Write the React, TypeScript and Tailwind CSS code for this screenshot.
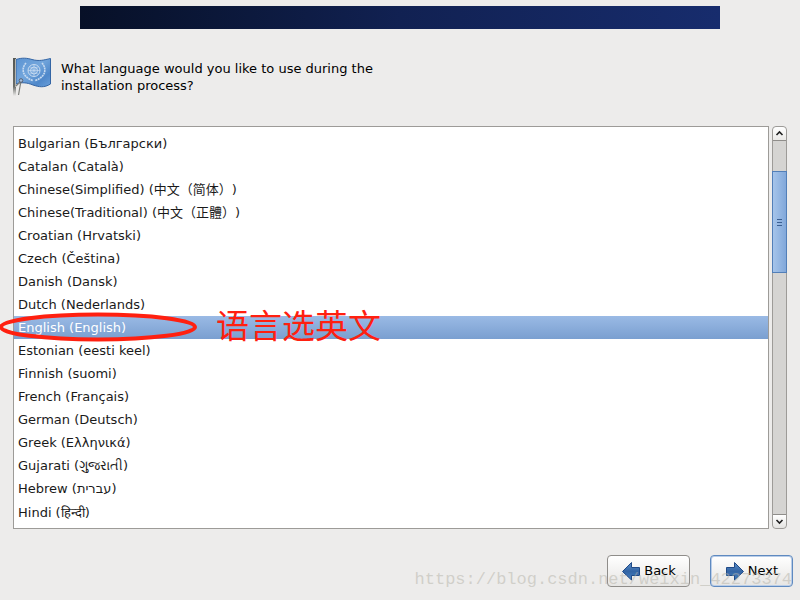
import { useState } from "react";

const languages = [
  "Bulgarian (Български)",
  "Catalan (Català)",
  "Chinese(Simplified) (中文（简体）)",
  "Chinese(Traditional) (中文（正體）)",
  "Croatian (Hrvatski)",
  "Czech (Čeština)",
  "Danish (Dansk)",
  "Dutch (Nederlands)",
  "English (English)",
  "Estonian (eesti keel)",
  "Finnish (suomi)",
  "French (Français)",
  "German (Deutsch)",
  "Greek (Ελληνικά)",
  "Gujarati (ગુજરાતી)",
  "Hebrew (עברית)",
  "Hindi (हिन्दी)",
];

const tallRows = ["Hebrew (עברית)", "Hindi (हिन्दी)"];

function FlagIcon() {
  return (
    <svg width="40" height="40" viewBox="0 0 40 40" aria-hidden="true">
      <defs>
        <linearGradient id="flag" x1="0" y1="0" x2="1" y2="1">
          <stop offset="0" stopColor="#5b93d2" />
          <stop offset="0.45" stopColor="#73a6dc" />
          <stop offset="0.75" stopColor="#4f88ca" />
          <stop offset="1" stopColor="#6a9fda" />
        </linearGradient>
        <linearGradient id="pole" x1="0" y1="0" x2="0" y2="1">
          <stop offset="0" stopColor="#555753" />
          <stop offset="0.75" stopColor="#6b6d69" />
          <stop offset="1" stopColor="#6b6d69" stopOpacity="0" />
        </linearGradient>
      </defs>
      <path
        d="M4 2.500 C10 0.500 15 1 20 2.500 C27 4.500 32 3 38.500 1.500 V27 C32 31 27 30 21 28 C15 25.500 9 25 4 27 Z"
        fill="url(#flag)"
        stroke="#3465a4"
      />
      <g fill="none" stroke="#c6daf0" strokeWidth="1">
        <circle cx="22" cy="13.500" r="6" />
        <circle cx="22" cy="13.500" r="3.500" />
        <path d="M16 13.500 H28 M22 7.500 V19.500 M18 9.500 L26 17.500 M26 9.500 L18 17.500" strokeWidth="0.700" />
        <path d="M14 6 C8 13 12 21 21 23.500 M30 6 C36 13 32 21 23 23.500" strokeWidth="1.600" strokeDasharray="2 0.600" />
      </g>
      <rect x="1" y="1" width="3" height="38" fill="url(#pole)" />
      <path d="M3.500 2 V30" stroke="#b4b6b2" />
      <path d="M9 24 L6.500 38 M4 29 L8 25" stroke="#7d7f7b" strokeWidth="1.200" />
      <circle cx="9" cy="23.500" r="1.800" fill="#a9c0dc" stroke="#555f70" />
    </svg>
  );
}

function ArrowIcon({ forward }: { forward: boolean }) {
  return (
    <svg width="20" height="20" viewBox="0 0 20 20" aria-hidden="true">
      <defs>
        <linearGradient id={forward ? "next" : "back"} x1="0" y1="0" x2="0" y2="1">
          <stop offset="0" stopColor="#5a8fca" />
          <stop offset="0.500" stopColor="#3465a4" />
          <stop offset="1" stopColor="#4680c2" />
        </linearGradient>
      </defs>
      <path
        d={
          forward
            ? "M1.500 6.500 H9.500 V1.500 L18.500 10.500 L9.500 19 V14.500 H1.500 Z"
            : "M18.500 6.500 H10.500 V1.500 L1.500 10.500 L10.500 19 V14.500 H18.500 Z"
        }
        fill={forward ? "url(#next)" : "url(#back)"}
        stroke="#204a87"
      />
    </svg>
  );
}

function Chevron({ down }: { down?: boolean }) {
  return (
    <svg width="9" height="7" viewBox="0 0 9 7" aria-hidden="true">
      <path d={down ? "M1.500 2 L4.500 5 L7.500 2" : "M1.500 5 L4.500 2 L7.500 5"} fill="none" stroke="#202020" strokeWidth="1.600" />
    </svg>
  );
}

function Scrollbar() {
  return (
    <div className="flex w-[15px] shrink-0 flex-col rounded-sm border border-[#9d9b98] bg-[#d5d4d2]">
      <button aria-label="Scroll up" className="flex h-3.5 shrink-0 items-center justify-center rounded-t-sm border-b border-[#8f8d8a] bg-linear-to-b from-white to-[#eae9e7]">
        <Chevron />
      </button>
      <div className="grow-30" />
      <div className="-mx-px flex h-[102px] flex-col items-center justify-center gap-0.5 border border-[#527fb8] bg-linear-to-r from-[#a5c4ea] to-[#82a8da]">
        <span className="h-px w-[5px] bg-[#3b5f92]" />
        <span className="h-px w-[5px] bg-[#3b5f92]" />
        <span className="h-px w-[5px] bg-[#3b5f92]" />
      </div>
      <div className="grow-241" />
      <button aria-label="Scroll down" className="flex h-3.5 shrink-0 items-center justify-center rounded-b-sm border-t border-[#8f8d8a] bg-linear-to-b from-white to-[#e4e3e1]">
        <Chevron down />
      </button>
    </div>
  );
}

export default function App() {
  const [language, setLanguage] = useState("English (English)");

  return (
    <main className="relative flex min-h-screen flex-col overflow-hidden bg-[#edeceb] pt-1.5 pb-[13px] font-['DejaVu_Sans','Noto_Sans_CJK_SC',sans-serif] text-[13px] text-[#1a1a1a]">
      <div className="mx-auto h-[23px] w-4/5 shrink-0 bg-linear-to-r from-[#071027] via-[#112152] to-[#172c6d]" />

      <header className="mt-7 flex h-10 items-center gap-2 pl-3 text-black">
        <FlagIcon />
        <h1 className="w-[340px] pl-px leading-[17px]">What language would you like to use during the installation process?</h1>
      </header>

      <section className="mt-[29px] flex grow gap-[3px] px-[13px]">
        <fieldset aria-label="Installation language" className="min-w-0 grow border border-[#9d9b98] bg-white pt-[5px] pb-0.5">
          {languages.map((name) => (
            <label
              key={name}
              className={`flex items-center px-1 leading-5 whitespace-nowrap [text-spacing-trim:space-all] ${tallRows.includes(name) ? "h-6" : "h-[23px]"} ${
                name === language ? "bg-linear-to-b from-[#9abae5] to-[#7a9fd0] text-white" : ""
              }`}
            >
              <input
                type="radio"
                name="language"
                className="size-0 appearance-none"
                checked={name === language}
                onChange={() => setLanguage(name)}
              />
              {name}
            </label>
          ))}
        </fieldset>
        <Scrollbar />
      </section>

      <footer className="mt-[26px] flex justify-end gap-5 pr-[7px] text-black">
        <button className="flex h-8 w-[83px] items-center justify-center gap-[3px] rounded-sm border border-[#8f8d8a] bg-linear-to-b from-white to-[#e6e5e3]">
          <ArrowIcon forward={false} />
          Back
        </button>
        <button className="flex h-8 w-[83px] items-center justify-center gap-[3px] rounded-sm border border-[#5f8ac0] bg-linear-to-b from-white to-[#e6e5e3] ring-1 ring-[#b9cde8] ring-inset">
          <ArrowIcon forward />
          Next
        </button>
      </footer>

      <svg className="pointer-events-none absolute top-[312px] left-0" width="198" height="31" viewBox="0 0 198 31" aria-hidden="true">
        <ellipse cx="98" cy="15" rx="97" ry="12.500" fill="none" stroke="#ff2010" strokeWidth="4" />
      </svg>
      <p className="pointer-events-none absolute top-[304px] left-[216px] font-['Noto_Sans_CJK_SC',sans-serif] text-[33px] leading-10 font-normal text-[#ff2010]">
        语言选英文
      </p>
      <p className="pointer-events-none absolute right-2 bottom-2 font-['Liberation_Mono',monospace] text-[17px] leading-6 text-[#b4b2a8]/50">
        https://blog.csdn.net/weixin_42273374
      </p>
    </main>
  );
}
